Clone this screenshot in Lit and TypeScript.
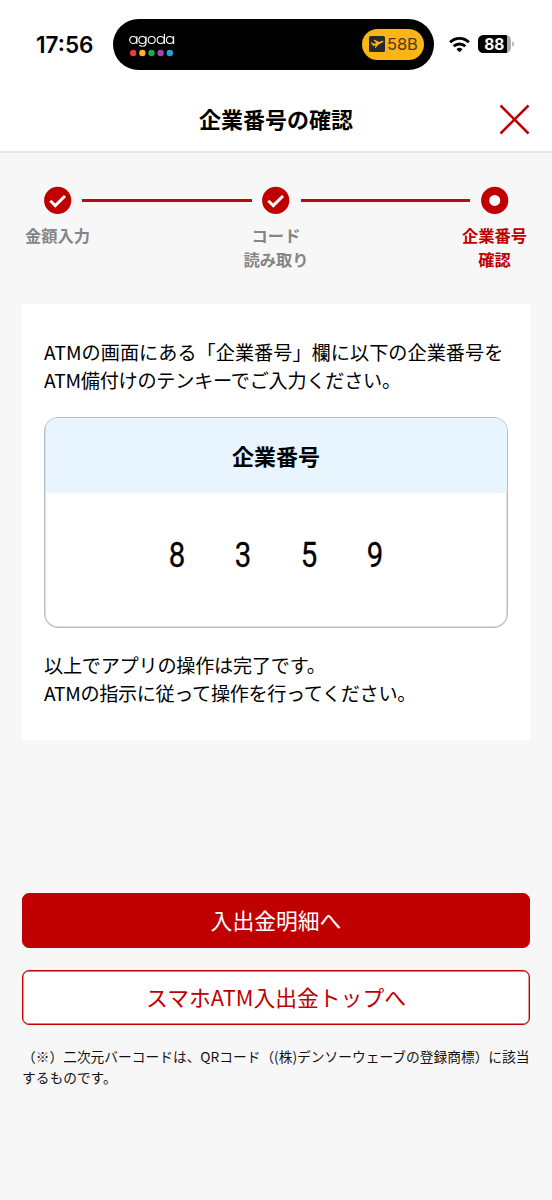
import { LitElement, html, css, svg } from "lit";
import { customElement, property } from "lit/decorators.js";

@customElement("status-bar")
class StatusBar extends LitElement {
  static styles = css`
    :host {
      display: flex;
      align-items: center;
      height: 50px;
      padding: 19px 37px 0 36px;
      font-family: Inter, "Liberation Sans", sans-serif;
      color: #000;
    }
    .time {
      width: 77px;
      flex: none;
      font-size: 22.500px;
      font-weight: 600;
      line-height: 50px;
      padding-top: 2px;
      letter-spacing: 0;
    }
    .island {
      box-sizing: border-box;
      width: 321px;
      flex: none;
      height: 51px;
      border-radius: 26px;
      background: #000;
      display: flex;
      align-items: center;
      justify-content: space-between;
      padding: 0 10px 0 16px;
    }
    .brand {
      display: flex;
      flex-direction: column;
      width: 46px;
      margin-top: 1px;
    }
    .word {
      display: block;
      width: 46px;
      height: 16px;
    }
    .dots {
      display: block;
      width: 46px;
      height: 8px;
      margin-top: 1px;
    }
    .gate {
      box-sizing: border-box;
      width: 62px;
      height: 31px;
      border-radius: 16px;
      background: #fdb515;
      display: flex;
      align-items: center;
      padding-left: 7px;
      gap: 2px;
      color: #4a3a1c;
      font-size: 16.500px;
      letter-spacing: -0.1px;
    }
    .wifi {
      display: block;
      margin-left: 14px;
    }
    .battery {
      display: block;
      margin-left: 7px;
    }
    svg {
      flex: none;
    }
  `;
  render() {
    const colors = ["#ee3a3e", "#fdb813", "#16ab54", "#a24aa8", "#1da3de"];
    return html`
      <span class="time">17:56</span>
      <div class="island">
        <div class="brand">
          <svg class="word" viewBox="0 0 46 16" fill="none" stroke="#fff" stroke-width="1.1">
            <circle cx="4.2" cy="8" r="3.5" /><path d="M7.900 4.200v7.700" />
            <circle cx="13.300" cy="8" r="3.5" /><path d="M17 4.200v6.800q0 3.300-3.600 3.300-2 0-3.100-1.200" />
            <circle cx="22.700" cy="8" r="3.5" />
            <circle cx="31.700" cy="8" r="3.5" /><path d="M35.400 2v9.900" />
            <circle cx="40.900" cy="8" r="3.5" /><path d="M44.600 4.200v7.700" />
          </svg>
          <svg class="dots" viewBox="0 0 46 8">
            ${colors.map((c, i) => svg`<circle cx=${4.2 + i * 9.15} cy="4" r="3.2" fill=${c} />`)}
          </svg>
        </div>
        <div class="gate">
          <svg width="16" height="16" viewBox="0 0 16 16">
            <rect width="16" height="16" rx="1.500" fill="#222a32" />
            <path d="M1.8 6.5l1-.2 2.1 1.4 2.4-.8-3-2.800 1.300-.4 4.600 2.200 2.500-1q1.500-.4 1.800.3.1.8-1.200 1.400L9.600 8.500l-2.900 3.300-1.100.3 1.200-2.700-2.600.6z" fill="#fdb515" />
          </svg>
          <span>58B</span>
        </div>
      </div>
      <svg class="wifi" width="22" height="17" viewBox="0 0 22 17" fill="none" stroke="#000" stroke-width="2.900">
        <path d="M2.100 6.300a13.200 13.200 0 0 1 18.800 0" />
        <path d="M5.700 10.300a8.300 8.300 0 0 1 11.600 0" />
        <path d="M11.500 16.200l-3-3a4.300 4.300 0 0 1 6 0z" fill="#000" stroke="none" />
      </svg>
      <svg class="battery" width="38" height="20" viewBox="-1 0 38 20">
        <defs><clipPath id="b"><rect x="0" y="1" width="33" height="18" rx="5.500" /></clipPath></defs>
        <g clip-path="url(#b)">
          <rect width="33" height="20" fill="#aaa" />
          <rect width="29" height="20" fill="#000" />
        </g>
        <path d="M34.200 7.200q2 .8 2 2.800t-2 2.800z" fill="#b5b5b5" />
        <text x="16.300" y="15.500" text-anchor="middle" font-size="15.500" font-weight="700" fill="#fff">88</text>
      </svg>
    `;
  }
}

@customElement("step-item")
class StepItem extends LitElement {
  @property({ type: Boolean }) current = false;
  @property({ attribute: false }) lines: string[] = [];
  static styles = css`
    :host {
      display: flex;
      flex-direction: column;
      align-items: center;
      width: 71px;
      flex: none;
      color: #858585;
      font-size: 16.300px;
      font-weight: 700;
      line-height: 24px;
      white-space: nowrap;
    }
    :host([current]) {
      color: #c00000;
    }
    .mark {
      display: block;
      margin-bottom: 9px;
    }
  `;
  render() {
    return html`
      <svg class="mark" width="28" height="28" viewBox="0 0 28 28">
        <circle cx="13.700" cy="14.400" r="13.600" fill="#c00000" />
        ${this.current
          ? svg`<circle cx="13.700" cy="14.400" r="5.500" fill="#fff" />`
          : svg`<path d="M6.300 14.700l5 4.900 9.700-9.600" fill="none" stroke="#fff" stroke-width="2.900" />`}
      </svg>
      ${this.lines.map((l) => html`<span>${l}</span>`)}
    `;
  }
}

@customElement("app-root")
class AppRoot extends LitElement {
  static styles = css`
    :host {
      display: block;
      min-height: 1200px;
      background: #f7f7f7;
      color: #000;
      font-family: "Noto Sans CJK JP", sans-serif;
    }
    .top {
      background: #fff;
      border-bottom: 2px solid #e6e6e6;
      height: 151px;
    }
    .header {
      display: grid;
      grid-template-columns: 1fr auto 1fr;
      align-items: center;
      height: 64px;
      margin-top: 18px;
      padding: 0 22px;
    }
    .title {
      grid-column: 2;
      margin: 0;
      font-size: 22px;
      line-height: 32px;
      padding-bottom: 2px;
      font-weight: 700;
    }
    .close {
      justify-self: end;
      display: block;
    }
    .steps {
      display: flex;
      align-items: flex-start;
      padding: 33px 22px 0;
      height: 118px;
    }
    .line {
      flex: 1;
      height: 3px;
      margin: 13px -11px 0;
      background: #b80a10;
    }
    .card {
      margin: 0 22px;
      background: #fff;
      height: 402px;
      padding: 34px 22px 0;
    }
    .text {
      margin: 0;
      font-size: 19.150px;
      line-height: 28px;
      white-space: nowrap;
    }
    .text span {
      display: block;
    }
    .wide {
      letter-spacing: 0.03px;
    }
    .snug {
      letter-spacing: -0.24px;
    }
    .tight {
      letter-spacing: -0.36px;
    }
    .box {
      box-sizing: border-box;
      height: 211px;
      margin: 23px 0 23px;
      border: 1px solid #b9bcc0;
      box-shadow: inset 0 0 0 0.500px #b9bcc0;
      border-radius: 14px;
      overflow: hidden;
    }
    .box-head {
      height: 75px;
      margin: 0 0.500px;
      background: #e8f5fe;
      text-align: center;
      font-size: 22px;
      font-weight: 700;
      line-height: 75px;
    }
    .digits {
      display: grid;
      grid-template-columns: repeat(4, 66px);
      justify-content: center;
      height: 125px;
      align-items: center;
      text-align: center;
      font-family: Roboto, sans-serif;
      font-size: 35px;
      line-height: 40px;
    }
    .digit {
      display: block;
      transform: scaleX(0.84);
      -webkit-text-stroke: 0.3px #000;
    }
    .actions {
      display: grid;
      gap: 22px;
      padding: 153px 22px 0;
    }
    .btn {
      box-sizing: border-box;
      height: 55px;
      border: 1px solid #c00000;
      box-shadow: inset 0 0 0 0.400px #c00000;
      border-radius: 7px;
      background: #fff;
      color: #c00000;
      font: inherit;
      font-size: 21.800px;
      line-height: 32px;
      padding: 0 0 2px;
    }
    .btn.primary {
      background: #c00000;
      color: #fff;
    }
    .note {
      margin: 21px 20px 0 22px;
      font-size: 13.720px;
      line-height: 20.500px;
      color: #111;
    }
    .note span {
      display: block;
      white-space: nowrap;
    }
  `;
  render() {
    return html`
      <div class="top">
        <status-bar></status-bar>
        <header class="header">
          <h1 class="title">企業番号の確認</h1>
          <svg class="close" width="31" height="31" viewBox="0 0 31 31" stroke="#c00000" stroke-width="2.500">
            <path d="M1.500 1.500l28 28M29.500 1.500l-28 28" />
          </svg>
        </header>
      </div>
      <nav class="steps">
        <step-item .lines=${["金額入力"]}></step-item>
        <div class="line"></div>
        <step-item .lines=${["コード", "読み取り"]}></step-item>
        <div class="line"></div>
        <step-item current .lines=${["企業番号", "確認"]}></step-item>
      </nav>
      <main class="card">
        <p class="text">
          <span class="wide">ATMの画面にある「企業番号」欄に以下の企業番号を</span>
          <span class="snug">ATM備付けのテンキーでご入力ください。</span>
        </p>
        <section class="box">
          <div class="box-head">企業番号</div>
          <div class="digits">
            ${["8", "3", "5", "9"].map((d) => html`<span class="digit">${d}</span>`)}
          </div>
        </section>
        <p class="text">
          <span class="snug">以上でアプリの操作は完了です。</span>
          <span class="tight">ATMの指示に従って操作を行ってください。</span>
        </p>
      </main>
      <div class="actions">
        <button class="btn primary">入出金明細へ</button>
        <button class="btn">スマホATM入出金トップへ</button>
      </div>
      <p class="note">
        <span>（※）二次元バーコードは、QRコード（(株)デンソーウェーブの登録商標）に該当</span>
        <span>するものです。</span>
      </p>
    `;
  }
}
